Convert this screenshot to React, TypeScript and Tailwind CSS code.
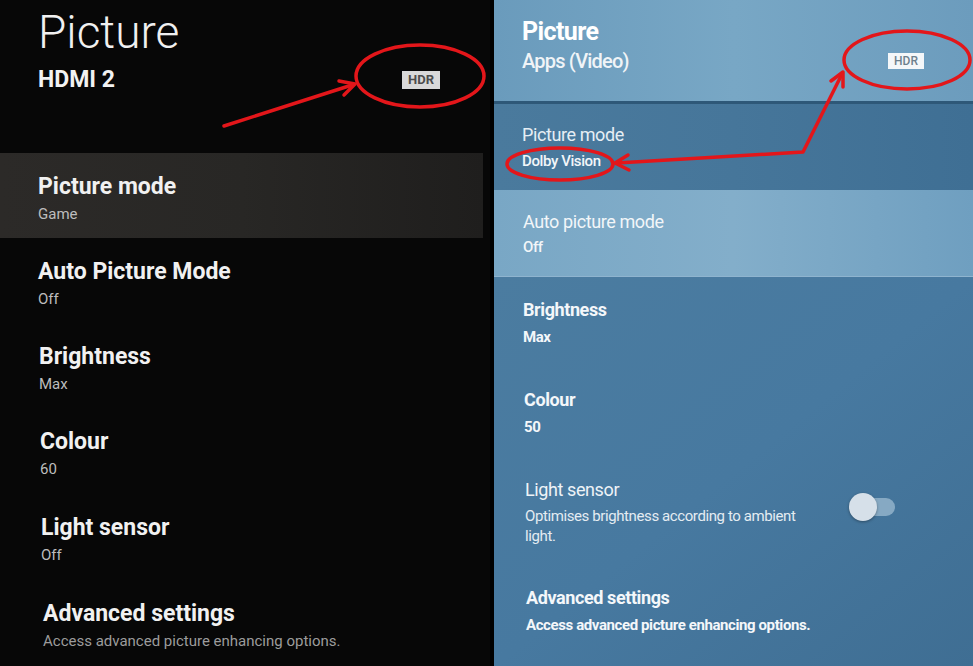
import React from "react";

type Row = {
  title: string;
  value: string;
  pad: string;
  active?: boolean;
  dim?: boolean;
};

const leftRows: Row[] = [
  { title: "Picture mode", value: "Game", pad: "pl-[38px] pt-[21px]", active: true },
  { title: "Auto Picture Mode", value: "Off", pad: "pl-[38px] pt-[21px]" },
  { title: "Brightness", value: "Max", pad: "pl-[39px] pt-[21px]" },
  { title: "Colour", value: "60", pad: "pl-[40px] pt-[21px]" },
  { title: "Light sensor", value: "Off", pad: "pl-[41px] pt-[22px]" },
  {
    title: "Advanced settings",
    value: "Access advanced picture enhancing options.",
    pad: "pl-[43px] pt-[23px]",
    dim: true,
  },
];

function LeftPanel() {
  return (
    <div className="flex w-[490px] shrink-0 flex-col bg-[#070707]">
      <div className="h-[153px] pl-[38px] pr-[50px] pt-[9px]">
        <div className="text-[46px] font-light leading-none text-[#f0f0f0]">Picture</div>
        <div className="mt-[12px] flex items-center justify-between">
          <span className="text-[23px] font-bold leading-[26px] text-[#f2f2f2]">HDMI 2</span>
          <span className="h-[18px] bg-[#d9d9d9] px-[6px] text-[13px] font-bold leading-[18px] text-[#4d4d4d]">
            HDR
          </span>
        </div>
      </div>

      {leftRows.map((row) => (
        <div
          key={row.title}
          className={`h-[85px] shrink-0 ${row.pad} ${
            row.active ? "mr-[7px] bg-linear-to-r from-[#2c2a28] via-[#282725] to-[#1f1e1d]" : ""
          }`}
        >
          <div className="text-[23px] font-bold leading-[26px] text-[#f1f1f1]">{row.title}</div>
          <div
            className={`mt-[4px] text-[15px] leading-[20px] ${
              row.dim ? "text-[#9c9c9c]" : "text-[#bdbdbd]"
            }`}
          >
            {row.value}
          </div>
        </div>
      ))}
    </div>
  );
}

function Toggle() {
  return (
    <div className="relative h-[28px] w-[46px]">
      <div className="absolute right-0 top-[5px] h-[18px] w-[34px] rounded-full bg-[#86a9c3]" />
      <div className="absolute left-0 top-0 h-[28px] w-[28px] rounded-full bg-[#d6e0e9] shadow-[0_1px_3px_rgba(0,0,0,0.35)]" />
    </div>
  );
}

function RightPanel() {
  return (
    <div className="ml-[4px] flex flex-1 flex-col tracking-[-0.4px]">
      <div className="h-[101px] shrink-0 bg-linear-to-r from-[#6a9bbc] via-[#78a7c5] to-[#6c9cbd] pl-[28px] pr-[49px] pt-[18px]">
        <div className="text-[25px] font-bold leading-[28px] tracking-[-0.6px] text-white">Picture</div>
        <div className="mt-[3px] flex items-center justify-between">
          <span className="text-[20px] font-medium leading-[24px] tracking-[-0.8px] text-[#f0f4f7]">
            Apps (Video)
          </span>
          <span className="h-[16px] bg-[#f4f7f9] px-[6px] text-[12px] font-medium leading-[16px] tracking-normal text-[#6d808d]">
            HDR
          </span>
        </div>
      </div>
      <div className="h-[3px] shrink-0 bg-[#2e5878]" />

      <div className="h-[86px] shrink-0 bg-linear-to-r from-[#4a7a9d] via-[#46769a] to-[#3f6f94] pl-[28px] pt-[20px]">
        <div className="text-[18px] leading-[22px] text-[#e6eef4]">Picture mode</div>
        <div className="mt-[5px] text-[15px] font-medium leading-[20px] text-[#f2f6f9]">Dolby Vision</div>
      </div>

      <div className="h-[86px] shrink-0 bg-linear-to-r from-[#79a7c5] via-[#83aeca] to-[#6f9fc0] pl-[29px] pt-[21px]">
        <div className="text-[18px] leading-[22px] text-[#f2f6f9]">Auto picture mode</div>
        <div className="mt-[4px] text-[15px] font-medium leading-[20px] text-[#f2f6f9]">Off</div>
      </div>

      <div className="flex flex-1 flex-col border-t border-[#8fb4cf] bg-linear-to-br from-[#4b7ca0] via-[#4779a0] to-[#3f6e93]">
        <div className="h-[90px] shrink-0 pl-[29px] pt-[22px]">
          <div className="text-[18px] font-bold leading-[22px] text-[#f4f7fa]">Brightness</div>
          <div className="mt-[6px] text-[15px] font-bold leading-[20px] text-[#f4f7fa]">Max</div>
        </div>
        <div className="h-[90px] shrink-0 pl-[30px] pt-[22px]">
          <div className="text-[18px] font-bold leading-[22px] text-[#f4f7fa]">Colour</div>
          <div className="mt-[6px] text-[15px] font-bold leading-[20px] text-[#f4f7fa]">50</div>
        </div>
        <div className="flex h-[108px] shrink-0 items-start justify-between pl-[31px] pr-[78px] pt-[22px]">
          <div>
            <div className="text-[18px] leading-[22px] text-[#eef3f7]">Light sensor</div>
            <div className="mt-[5px] max-w-[300px] text-[15px] leading-[20px] text-[#e4ecf2]">
              Optimises brightness according to ambient light.
            </div>
          </div>
          <div className="mt-[14px]">
            <Toggle />
          </div>
        </div>
        <div className="pl-[32px] pt-[22px]">
          <div className="text-[18px] font-bold leading-[22px] text-[#f4f7fa]">Advanced settings</div>
          <div className="mt-[6px] text-[15px] font-bold leading-[20px] text-[#f4f7fa]">
            Access advanced picture enhancing options.
          </div>
        </div>
      </div>
    </div>
  );
}

function Annotations() {
  const red = "#e3161a";
  return (
    <svg
      className="pointer-events-none absolute inset-0"
      width={973}
      height={666}
      viewBox="0 0 973 666"
      fill="none"
    >
      <ellipse cx={420} cy={76} rx={64} ry={31} stroke={red} strokeWidth={3.5} />
      <line x1={224} y1={126} x2={352} y2={85} stroke={red} strokeWidth={3.5} strokeLinecap="round" />
      <polyline
        points="339,81 355,84 344,95"
        stroke={red}
        strokeWidth={3.5}
        strokeLinecap="round"
        strokeLinejoin="round"
      />

      <ellipse cx={907} cy={60} rx={63} ry={29} stroke={red} strokeWidth={3.5} />
      <ellipse cx={560} cy={164} rx={53} ry={16} stroke={red} strokeWidth={3.5} />
      <polyline
        points="617,163 803,152 842,74"
        stroke={red}
        strokeWidth={3.5}
        strokeLinecap="round"
        strokeLinejoin="round"
      />
      <polyline
        points="628,155 615,163 629,170"
        stroke={red}
        strokeWidth={3.5}
        strokeLinecap="round"
        strokeLinejoin="round"
      />
      <polyline
        points="831,81 843,72 843,87"
        stroke={red}
        strokeWidth={3.5}
        strokeLinecap="round"
        strokeLinejoin="round"
      />
    </svg>
  );
}

export default function App() {
  return (
    <div className="relative flex h-[666px] w-[973px] overflow-hidden bg-black font-['Roboto',sans-serif]">
      <LeftPanel />
      <RightPanel />
      <Annotations />
    </div>
  );
}
